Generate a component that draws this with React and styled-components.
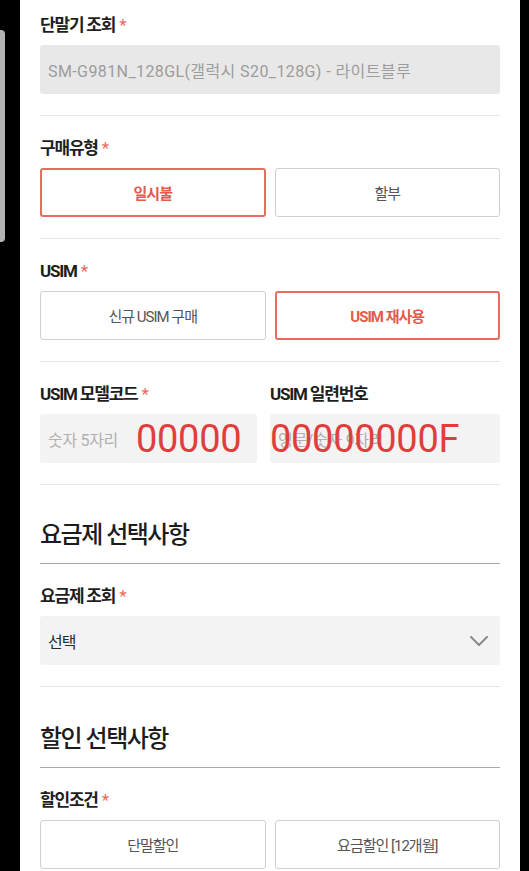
import styled, { createGlobalStyle } from 'styled-components'

const GlobalStyle = createGlobalStyle`
  html, body {
    margin: 0;
    padding: 0;
    background: #000;
    overflow: hidden;
  }
  body {
    font-family: Roboto, "Noto Sans CJK KR", sans-serif;
    color: #222;
  }
  * {
    box-sizing: border-box;
  }
`

const Screen = styled.div`
  display: flex;
  height: 871px;
  overflow: hidden;
`

const Gutter = styled.div`
  flex: none;
  width: 20px;
`

const ScrollHandle = styled.div`
  width: 5px;
  height: 212px;
  margin-top: 30px;
  background: #b3b3b3;
  border-radius: 0 4px 4px 0;
`

const Panel = styled.main`
  flex: none;
  width: 500px;
  background: #fff;
  padding: 0 20px;
`

const Field = styled.section`
  padding: ${(p) => (p.$first ? '13px' : '20px')} 0 21px;
  border-bottom: 1px solid #e7e7e7;
`

const Label = styled.div`
  font-size: 17px;
  font-weight: 700;
  line-height: 24px;
  letter-spacing: -1.2px;
  color: #1e1e1e;
  margin-bottom: 8px;
  white-space: nowrap;
`

const Star = styled.span`
  color: #e8695b;
  margin-left: 4px;
  font-weight: 400;
`

const ReadonlyBox = styled.div`
  height: 49px;
  display: flex;
  align-items: center;
  padding: 0 8px;
  background: #e8e8e8;
  border-radius: 3px;
  font-size: 16px;
  color: #9c9c9c;
  letter-spacing: 0.4px;
  white-space: nowrap;
`

const ChoiceRow = styled.div`
  display: grid;
  grid-template-columns: 1fr 1fr;
  gap: 9px;
`

const Choice = styled.button`
  height: 49px;
  background: #fff;
  border: ${(p) => (p.$active ? '2px solid #ea6c5e' : '1px solid #cfcfcf')};
  border-radius: 3px;
  font-family: inherit;
  font-size: 15px;
  letter-spacing: -1px;
  font-weight: ${(p) => (p.$active ? 700 : 400)};
  color: ${(p) => (p.$active ? '#e35b4b' : '#555')};
  cursor: pointer;
`

const InputGrid = styled.div`
  display: grid;
  grid-template-columns: 217px 1fr;
  gap: 13px;
`

const InputBox = styled.div`
  position: relative;
  height: 49px;
  display: flex;
  align-items: center;
  padding: 0 8px;
  background: #f3f3f3;
  border-radius: 3px;
  font-size: 16px;
  color: #b0b0b0;
  letter-spacing: -0.3px;
  white-space: nowrap;
`

const Scribble = styled.span`
  position: absolute;
  left: ${(p) => p.$left}px;
  top: 50%;
  transform: translateY(-50%);
  font-family: Roboto, sans-serif;
  font-size: 38px;
  line-height: 1;
  color: #e03e3c;
  pointer-events: none;
`

const SectionHead = styled.h2`
  margin: 0;
  padding: ${(p) => p.$top}px 0 13px;
  border-bottom: 1px solid #a9a9a9;
  font-size: 24px;
  line-height: 30px;
  font-weight: 500;
  letter-spacing: -1.5px;
  color: #1c1c1c;
`

const Select = styled.div`
  height: 49px;
  display: flex;
  align-items: center;
  justify-content: space-between;
  padding: 0 12px 0 8px;
  background: #f3f3f3;
  border-radius: 3px;
  font-size: 16px;
  letter-spacing: -1px;
  color: #2a2a2a;
`

const Chevron = () => (
  <svg width="18" height="10" viewBox="0 0 18 10" fill="none">
    <path d="M1 1l8 8 8-8" stroke="#8a8a8a" strokeWidth="2" strokeLinecap="round" strokeLinejoin="round" />
  </svg>
)

function ChoiceField({ label, options, active }) {
  return (
    <Field>
      <Label>
        {label}
        <Star>*</Star>
      </Label>
      <ChoiceRow>
        {options.map((o) => (
          <Choice key={o} $active={o === active}>
            {o}
          </Choice>
        ))}
      </ChoiceRow>
    </Field>
  )
}

export default function App() {
  return (
    <>
      <GlobalStyle />
      <Screen>
        <Gutter>
          <ScrollHandle />
        </Gutter>
        <Panel>
          <Field $first>
            <Label>
              단말기 조회<Star>*</Star>
            </Label>
            <ReadonlyBox>SM-G981N_128GL(갤럭시 S20_128G) - 라이트블루</ReadonlyBox>
          </Field>

          <ChoiceField label="구매유형" options={['일시불', '할부']} active="일시불" />
          <ChoiceField label="USIM" options={['신규 USIM 구매', 'USIM 재사용']} active="USIM 재사용" />

          <Field>
            <InputGrid>
              <div>
                <Label>
                  USIM 모델코드<Star>*</Star>
                </Label>
                <InputBox>
                  숫자 5자리
                  <Scribble $left={96}>00000</Scribble>
                </InputBox>
              </div>
              <div>
                <Label>USIM 일련번호</Label>
                <InputBox>
                  영문/숫자 9자리
                  <Scribble $left={0}>00000000F</Scribble>
                </InputBox>
              </div>
            </InputGrid>
          </Field>

          <SectionHead $top={35}>요금제 선택사항</SectionHead>
          <Field>
            <Label>
              요금제 조회<Star>*</Star>
            </Label>
            <Select>
              선택
              <Chevron />
            </Select>
          </Field>

          <SectionHead $top={37}>할인 선택사항</SectionHead>
          <ChoiceField label="할인조건" options={['단말할인', '요금할인 [12개월]']} active={null} />
        </Panel>
      </Screen>
    </>
  )
}
